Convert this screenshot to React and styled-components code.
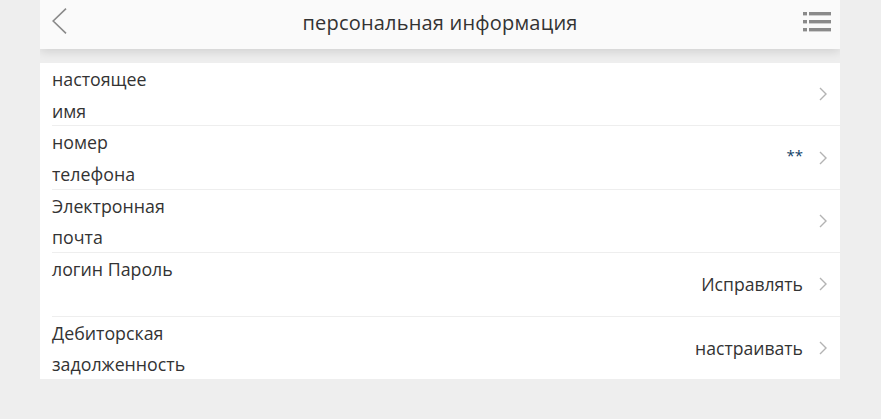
import React from 'react';
import styled, { createGlobalStyle } from 'styled-components';

const GlobalStyle = createGlobalStyle`
  html, body {
    margin: 0;
    padding: 0;
    background: #eeeeee;
  }

  body {
    font-family: "Open Sans", "Noto Sans", sans-serif;
    color: #333;
  }
`;

const Page = styled.div`
  width: 800px;
  height: 419px;
  margin-left: 40px;
  overflow: hidden;
`;

const Header = styled.header`
  height: 49px;
  box-sizing: border-box;
  padding: 0 9px 5px;
  display: flex;
  align-items: center;
  background: #fafafa;
  box-shadow: 0 2px 10px rgba(0, 0, 0, 0.14);
`;

const IconSlot = styled.div`
  width: 28px;
  margin-top: -2px;
  display: flex;
  justify-content: ${({ $end }) => ($end ? 'flex-end' : 'flex-start')};
  padding-left: ${({ $end }) => ($end ? '0' : '3px')};
  box-sizing: border-box;
`;

const Title = styled.h1`
  flex: 1;
  margin: 0;
  text-align: center;
  font-size: 20px;
  line-height: 27px;
  font-weight: 400;
  color: #333;
  letter-spacing: 0.2px;
`;

const List = styled.ul`
  margin: 14px 0 0;
  padding: 0 0 0 12px;
  list-style: none;
  background: #fff;
  height: 316px;
  overflow: hidden;
`;

const Row = styled.li`
  height: 63.4px;
  box-sizing: border-box;
  padding-right: 13px;
  display: flex;
  align-items: center;
  justify-content: space-between;
  border-bottom: 1px solid #eeeeee;
`;

const Label = styled.div`
  width: 125px;
  padding-top: 1px;
  align-self: flex-start;
  font-size: 17.8px;
  line-height: 31.7px;
  color: #333;
`;

const Side = styled.div`
  display: flex;
  align-items: center;
  gap: 16px;
`;

const Value = styled.span`
  font-size: ${({ $stars }) => ($stars ? '15px' : '17.6px')};
  color: ${({ $stars }) => ($stars ? '#0f3d66' : '#333')};
  margin-top: ${({ $stars }) => ($stars ? '-6px' : '0')};
`;

const BackIcon = () => (
  <svg width="15" height="26" viewBox="0 0 15 26" fill="none">
    <path d="M14 .7 1.2 13 14 25.3" stroke="#8a8a8a" strokeWidth="1.6" />
  </svg>
);

const MenuIcon = () => (
  <svg width="28" height="21" viewBox="0 0 28 21" fill="#8a8a8a">
    <rect x="0" y="1" width="4" height="3.4" />
    <rect x="6" y="1" width="22" height="3.4" />
    <rect x="0" y="9" width="4" height="3.4" />
    <rect x="6" y="9" width="22" height="3.4" />
    <rect x="0" y="17" width="4" height="3.4" />
    <rect x="6" y="17" width="22" height="3.4" />
  </svg>
);

const ArrowIcon = () => (
  <svg width="8" height="14" viewBox="0 0 8 14" fill="none">
    <path d="M1 1l6 6-6 6" stroke="#b3b3b3" strokeWidth="1.4" />
  </svg>
);

const rows = [
  { label: 'настоящее имя' },
  { label: 'номер телефона', value: '**', stars: true },
  { label: 'Электронная почта' },
  { label: 'логин Пароль', value: 'Исправлять' },
  { label: 'Дебиторская задолженность', value: 'настраивать' },
];

const App = () => (
  <Page>
    <GlobalStyle />
    <Header>
      <IconSlot>
        <BackIcon />
      </IconSlot>
      <Title>персональная информация</Title>
      <IconSlot $end>
        <MenuIcon />
      </IconSlot>
    </Header>
    <List>
      {rows.map((row) => (
        <Row key={row.label}>
          <Label>{row.label}</Label>
          <Side>
            {row.value && <Value $stars={row.stars}>{row.value}</Value>}
            <ArrowIcon />
          </Side>
        </Row>
      ))}
    </List>
  </Page>
);

export default App;
